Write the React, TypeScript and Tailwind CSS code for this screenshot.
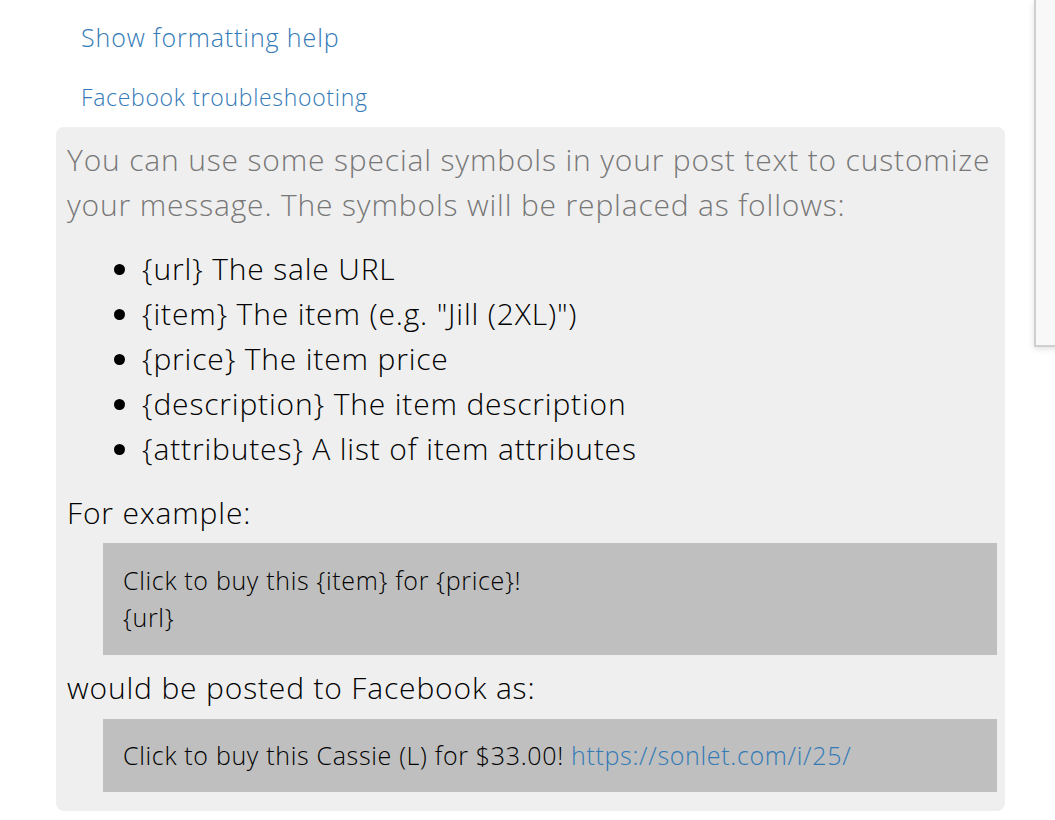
import React from "react";

const symbols: [string, string][] = [
  ["{url}", "The sale URL"],
  ["{item}", 'The item (e.g. "Jill (2XL)")'],
  ["{price}", "The item price"],
  ["{description}", "The item description"],
  ["{attributes}", "A list of item attributes"],
];

export default function App() {
  return (
    <div className="flex min-h-screen w-full items-start bg-white font-['Open_Sans','Lato',sans-serif] font-light tracking-[0.052em] text-black">
      {/* Main column */}
      <div className="w-[1005px] shrink-0 pl-[56px]">
        <div className="pl-[25px] pt-[18px]">
          <a href="#" className="block text-[25px] leading-[39px] tracking-[0.036em] text-[#337ab7]">
            Show formatting help
          </a>
          <a href="#" className="mt-[22px] block text-[23px] leading-[36px] tracking-[0.03em] text-[#337ab7]">
            Facebook troubleshooting
          </a>
        </div>

        {/* Formatting help panel */}
        <div className="mt-[12px] rounded-lg bg-[#efefef] pb-[19px] pl-[11px] pr-[8px] pt-[10px]">
          <p className="text-[30px] leading-[45px] text-[#777]">
            You can use some special symbols in your post text to customize your message. The
            symbols will be replaced as follows:
          </p>
          <ul className="mt-[19px] list-disc pl-[75px] text-[30px] leading-[45px] marker:text-black">
            {symbols.map(([tag, label]) => (
              <li key={tag}>
                {tag} {label}
              </li>
            ))}
          </ul>
          <p className="mt-[19px] text-[30px] leading-[45px]">For example:</p>
          <div className="ml-[36px] mt-[8px] bg-[#bfbfbf] px-[20px] py-[19px] text-[25px] leading-[37px] tracking-[0.027em]">
            Click to buy this {"{item}"} for {"{price}"}!
            <br />
            {"{url}"}
          </div>
          <p className="mt-[10px] text-[30px] leading-[45px]">would be posted to Facebook as:</p>
          <div className="ml-[36px] mt-[9px] bg-[#bfbfbf] px-[20px] py-[18px] text-[25px] leading-[37px] tracking-[0.027em]">
            Click to buy this Cassie (L) for $33.00!{" "}
            <a href="#" className="text-[#337ab7]">
              https://sonlet.com/i/25/
            </a>
          </div>
        </div>
      </div>

      {/* Side card, clipped by the window edge */}
      <div className="ml-[29px] h-[347px] w-[40px] shrink-0 border-b-2 border-l-2 border-[#cfcfcf] bg-[#f8f8f8] shadow-[0_2px_6px_rgba(0,0,0,0.12)]" />
    </div>
  );
}
